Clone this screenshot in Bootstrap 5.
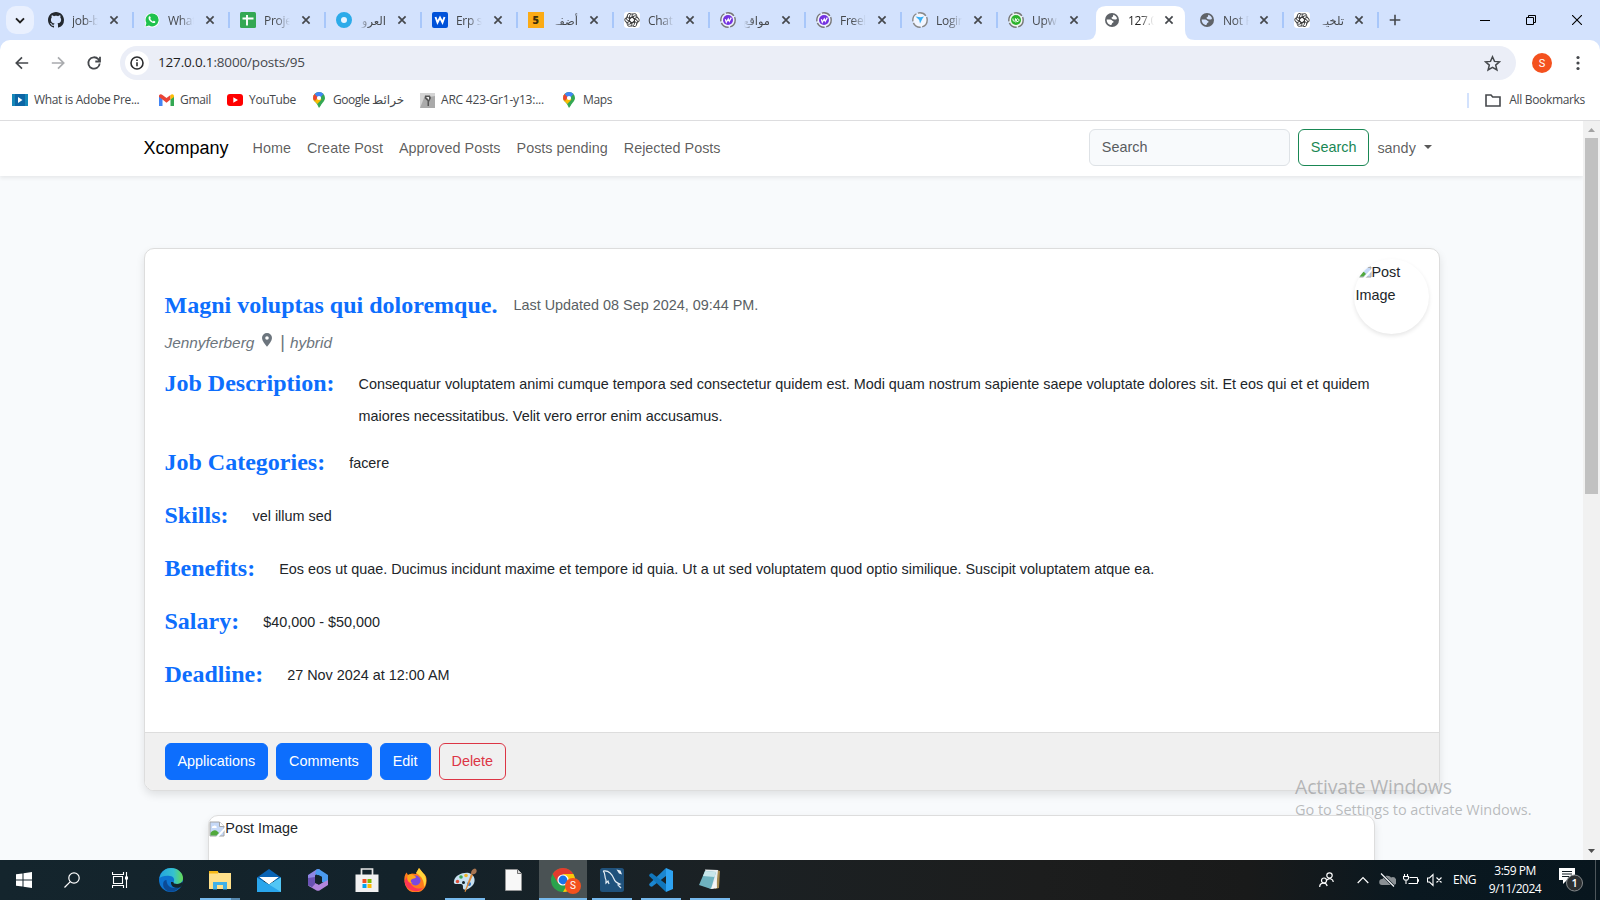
<!DOCTYPE html>
<html lang="en">
<head>
<meta charset="utf-8">
<meta name="viewport" content="width=device-width, initial-scale=1">
<title>127.0.0.1:8000/posts/95</title>
<link href="https://cdn.jsdelivr.net/npm/bootstrap@5.3.0/dist/css/bootstrap.min.css" rel="stylesheet">
<style>
  html, body { height: 900px; overflow: hidden; }
  body { font-family: "Liberation Sans", Arial, sans-serif; font-size: 14.4px; line-height: 1.6; background: #f8fafc; width: 1600px; }
  .ui-font { font-family: "Open Sans", "Noto Sans", "DejaVu Sans", sans-serif; color: #45484c; line-height: 1; }
  svg { display: block; flex: none; }

  /* tab strip */
  .tab-strip { height: 40px; background: #d3e2fd; padding-left: 6px; font-size: 12px; }
  .tab-search { width: 28px; height: 28px; border-radius: 10px; background: #e9f0fe; margin-right: 3px; }
  .tab-item { width: 96px; height: 40px; padding-left: 11px; position: relative; flex: none; }
  .tab-item.slim { width: 95px; }
  .tab-item::after { content: ""; position: absolute; right: -1px; top: 12px; width: 2px; height: 16px; background: #a8c7fa; }
  .tab-item.plain::after { display: none; }
  .tab-title { width: 26px; height: 18px; line-height: 18px; margin: 1px 11px 0 8px; overflow: hidden; white-space: nowrap; letter-spacing: -.3px; -webkit-mask-image: linear-gradient(90deg, #000 45%, transparent 100%); mask-image: linear-gradient(90deg, #000 45%, transparent 100%); }
  .slim .tab-title { margin-right: 10px; }
  .tab-item.site { padding-left: 12px; }
  .site .tab-title { margin-left: 9px; }
  .tab-title[dir=rtl] { -webkit-mask-image: linear-gradient(270deg, #000 60%, transparent 100%); mask-image: linear-gradient(270deg, #000 60%, transparent 100%); font-size: 11.5px; }
  .tab-item.current { color: #1f1f1f; z-index: 1; --cut: #fff; }
  .tab-item.current > * { position: relative; }
  .tab-shape { position: absolute !important; left: -7px; top: 6px; }
  .win-btn { width: 46px; }

  /* toolbar */
  .bar-wrap { background: #d3e2fd; }
  .tool-row { height: 46px; background: #fff; border-radius: 10px 10px 0 0; padding: 0 15px 0 14px; }
  .omnibox { height: 34px; border-radius: 17px; background: #ebeef7; width: 1396px; margin-left: 18px; padding: 0 15px 0 5px; }
  .site-info { width: 24px; height: 24px; border-radius: 50%; background: #fff; }
  .address { font-size: 13.5px; margin-left: 9px; letter-spacing: -.17px; }
  .avatar { width: 20px; height: 20px; border-radius: 50%; background: #f4511e; color: #fff; font-size: 11px; font-family: Roboto, sans-serif; }
  .bookmark-row { height: 35px; background: #fff; border-bottom: 1px solid #dddddf; font-size: 12px; letter-spacing: -.33px; padding: 0 15px 6px 12px; white-space: nowrap; }
  .bm svg { margin-right: 6px; }

  /* page */
  .viewport { width: 1583px; height: 739px; overflow: hidden; }
  .page-nav { box-shadow: 0 2px 4px rgba(0,0,0,.075); background: #fff; position: relative; }
  .page-nav .navbar-brand { font-size: 18px; }
  .page-nav .form-control, .btn { font-size: 14.4px; line-height: 1.6; }
  .page-nav .form-control { width: 201px; background: #f8fafc; }
  .page-nav .form-control::placeholder { color: #595c5f; }
  .post { margin-top: 72px; border: 1px solid #ddd; border-radius: 10px; box-shadow: 0 4px 8px rgba(0,0,0,.1); overflow: hidden; background: #fff; }
  .post-body { height: 483px; padding: 37px 20px 0; position: relative; }
  .serif-title { font-family: "Liberation Serif", "Times New Roman", serif; font-weight: 700; font-size: 24px; line-height: 38px; color: #0d6efd; margin: 0; white-space: nowrap; }
  .meta-row { font-size: 15.4px; font-style: italic; color: #6c757d; height: 40px; padding-bottom: 2px; }
  .meta-bar { font-style: normal; font-size: 18px; line-height: 1; position: relative; top: -1px; }
  .detail { column-gap: 24px; margin-bottom: 15px; }
  .detail p { margin: 0; line-height: 32px; padding-top: 4px; }
  .detail:not(.long) { height: 38px; }
  .detail.long { height: 64px; }
  .round-img { position: absolute; right: 10px; top: 10px; width: 75px; height: 75px; border-radius: 50%; overflow: hidden; line-height: 23px; padding: 2px 0 0 2px; }
  .round-shadow { position: absolute; right: 10px; top: 10px; width: 75px; height: 75px; border-radius: 50%; box-shadow: 0 2px 4px rgba(0,0,0,.1); }
  .post-foot { background: #f0f0f0; border-top: 1px solid #ddd; padding: 10px 20px; }
  .post-next { width: 90%; margin: 24px auto 0; padding-top: 1px; height: 200px; border: 1px solid #ddd; border-radius: 10px; overflow: hidden; background: #fff; box-shadow: 0 4px 8px rgba(0,0,0,.1); }
  .scroll-track { width: 17px; background: #f1f1f1; height: 739px; }
  .scroll-thumb { width: 13px; height: 356px; background: #c1c1c1; }
  .activate { position: absolute; left: 1295px; top: 773px; color: rgba(120,122,125,.5) !important; white-space: nowrap; z-index: 5; }

  /* taskbar */
  .taskbar { height: 40px; background: linear-gradient(90deg, #14252d 0, #13222a 25%, #1b2124 45%, #1c1d1d 65%, #191a1a 78%, #0a1820 88%, #08161e 100%); color: #fff !important; }
  .tb { width: 48px; height: 40px; flex: none; position: relative; }
  .tb.app { width: 49px; }
  .tb.run::after { content: ""; position: absolute; bottom: 0; left: 4.5px; width: 40px; height: 2px; background: #76b9ed; }
  .tb.stacked::after { background: linear-gradient(90deg, #76b9ed 31px, #5587ad 31px); }
  .tb.active-app { background: linear-gradient(90deg,transparent .5px,#4a5254 .5px,#4a5254 48.5px,transparent 48.5px); }
  .tb.active-app::after { left: .5px; width: 48px; }
  .user-dot { position: absolute; left: 27px; top: 18px; width: 16px; height: 16px; border-radius: 50%; background: #f4511e; font: 10px/16px Roboto, sans-serif; text-align: center; }
</style>
</head>
<body>
<!-- shared symbols -->
<svg width="0" height="0" class="position-absolute">
  <defs>
    <symbol id="x" viewBox="0 0 10 10"><path d="M1.400 1.400l7.200 7.200M8.600 1.400L1.400 8.600" stroke="#45484c" stroke-width="1.700" fill="none"/></symbol>
    <symbol id="globe" viewBox="0 0 14 14"><circle cx="7" cy="7" r="7" fill="#5f6368"/><path d="M8.200 1.800c1.800.4 3.200 1.800 3.800 3.400-.2 1.200-1.200 1.400-2.200 1.200L8 6.200c-.8-.4-1.600-.6-1.500-1.400.4-.8 1.700-.9 1.600-1.800z" style="fill:var(--cut,#d3e2fd)"/><path d="M1.700 6.500h3.500c1.600 0 1.800 1.500 3 1.700.8.300.4 1.400-.6 1.600-.9.400-.4 1.500-1.300 2.200C3.700 12 1.500 9.500 1.700 6.500z" style="fill:var(--cut,#d3e2fd)"/></symbol>
    <symbol id="gpt" viewBox="0 0 16 16"><rect width="16" height="16" rx="3" fill="#fff"/><g fill="none" stroke="#3c3c3c" stroke-width=".9"><g id="petal"><path d="M8 5.200V4.200a2.400 2.400 0 0 1 4.800-.4M5.600 9.400V4.300a2.600 2.600 0 0 1 3.600-2.200M5.600 6.600l2.400-1.400 4.200 2.400"/></g><use href="#petal" transform="rotate(60 8 8)"/><use href="#petal" transform="rotate(120 8 8)"/><use href="#petal" transform="rotate(180 8 8)"/><use href="#petal" transform="rotate(240 8 8)"/><use href="#petal" transform="rotate(300 8 8)"/></g></symbol>
    <symbol id="pur" viewBox="0 0 16 16"><circle cx="8" cy="8" r="7.200" fill="#eef2ff" stroke="#777" stroke-width="1.400" stroke-dasharray="9 1.500"/><circle cx="8" cy="8" r="5" fill="#7433e0"/><path d="M5.300 7.200l1 3 2-3.400 1 2.600 2-3.800" stroke="#fff" fill="none" stroke-width="1.200"/></symbol>
    <symbol id="pin" viewBox="0 0 12 16"><path d="M6 0a6 6 0 0 1 6 6c0 3-3 5-4.200 7.500L6 16l-1.500-3C3.200 10 0 9 0 6a6 6 0 0 1 6-6z" fill="#34a853"/><path d="M.3 7.500A6 6 0 0 1 1.600 2L8.500 7.500 4.300 12C3 10 .8 9.500.3 7.500z" fill="#fbbc04"/><path d="M.2 7A6 6 0 0 1 1.600 2l3.500 3L2 9z" fill="#ea4335"/><path d="M1.600 2A6 6 0 0 1 10.500 2L7 6 4.500 5z" fill="#4285f4"/><circle cx="6" cy="6" r="2.100" fill="#fff"/></symbol>
    <symbol id="broken" viewBox="0 0 16 16"><path d="M1 1h9.500L15 5.500V15H1z" fill="#c6d9f7" stroke="#a4a4a4"/><path d="M10.500 1v4.500H15" fill="#fff" stroke="#a4a4a4"/><path d="M3 6.500a1.300 1.300 0 0 1 1.500-1.500 1.500 1.500 0 0 1 2.500.3 1 1 0 0 1 .5 1.600H3z" fill="#fff"/><path d="M1.500 14.500v-2.500c2-3 5-3.500 7-1.500l1.500 1.500-2.500 2.500z" fill="#51a93c"/><path d="M16 6L7 16h2.500L16 9z" fill="#fff"/></symbol>
  </defs>
</svg>

<div class="tab-strip ui-font d-flex align-items-center">
  <div class="tab-search d-flex align-items-center justify-content-center"><svg width="10" height="7" viewBox="0 0 10 7"><path d="M1 1.300l4 4 4-4" fill="none" stroke="#1f1f1f" stroke-width="1.900"/></svg></div>
  <div class="tab-item d-flex align-items-center"><svg width="16" height="16" viewBox="0 0 16 16"><path fill="#24292f" d="M8 0C3.580 0 0 3.580 0 8c0 3.540 2.290 6.530 5.470 7.590.4.070.55-.17.55-.38 0-.19-.01-.82-.01-1.490-2.010.37-2.530-.49-2.690-.94-.09-.23-.48-.94-.82-1.130-.28-.15-.68-.52-.01-.53.630-.01 1.080.58 1.230.82.720 1.210 1.870.87 2.330.66.070-.52.280-.87.510-1.070-1.780-.2-3.640-.89-3.640-3.950 0-.87.310-1.590.820-2.150-.08-.2-.36-1.020.08-2.120 0 0 .67-.21 2.200.82.640-.18 1.320-.27 2-.27s1.360.09 2 .27c1.530-1.040 2.200-.82 2.200-.82.440 1.100.16 1.920.08 2.120.510.56.820 1.270.820 2.150 0 3.070-1.870 3.750-3.650 3.950.290.25.540.730.540 1.480 0 1.070-.01 1.930-.01 2.200 0 .21.150.46.550.38A8.010 8.010 0 0 0 16 8c0-4.420-3.580-8-8-8z"/></svg><div class="tab-title">job-b</div><svg width="10" height="10"><use href="#x"/></svg></div>
  <div class="tab-item d-flex align-items-center"><svg width="16" height="16" viewBox="0 0 16 16"><path d="M.5 15.500l1-4.200A7.300 7.300 0 1 1 4.500 14.500z" fill="#fff"/><path d="M1.500 14.500l.9-3.500A6.500 6.500 0 1 1 5 13.600z" fill="#1fc24d"/><path d="M5 4.500c1-1 1.500.5 1.800 1.200.2.500-.8.900-.5 1.400A5 5 0 0 0 8.600 9.400c.6.200.8-.9 1.300-.7.800.4 2 .7 1.300 1.800-1.500 2-7-1.500-6.600-4.700 0-.5.100-1 .4-1.300z" fill="#fff"/></svg><div class="tab-title">What</div><svg width="10" height="10"><use href="#x"/></svg></div>
  <div class="tab-item d-flex align-items-center"><svg width="16" height="16" viewBox="0 0 16 16"><rect width="16" height="16" rx="1.500" fill="#34a853"/><path d="M2.500 6.500h11M7 3v10.500" stroke="#fff" stroke-width="1.900"/></svg><div class="tab-title">Proje</div><svg width="10" height="10"><use href="#x"/></svg></div>
  <div class="tab-item d-flex align-items-center"><svg width="16" height="16" viewBox="0 0 16 16"><circle cx="8" cy="8" r="5.500" fill="#e8f4ff" stroke="#2cabe9" stroke-width="5"/></svg><div class="tab-title" dir="rtl">العرو</div><svg width="10" height="10"><use href="#x"/></svg></div>
  <div class="tab-item d-flex align-items-center"><svg width="16" height="16" viewBox="0 0 16 16"><rect width="16" height="16" rx="2" fill="#0052d9"/><path d="M3.500 5l2 5.500L8 5.500l2.500 5L12.500 5" fill="none" stroke="#fff" stroke-width="1.900"/></svg><div class="tab-title">Erp s</div><svg width="10" height="10"><use href="#x"/></svg></div>
  <div class="tab-item d-flex align-items-center"><svg width="16" height="16" viewBox="0 0 16 16"><rect width="16" height="16" fill="#fbab15"/><text x="4.600" y="12.200" font-size="11" font-weight="800" fill="#40300a">5</text></svg><div class="tab-title" dir="rtl">أضفـ</div><svg width="10" height="10"><use href="#x"/></svg></div>
  <div class="tab-item d-flex align-items-center"><svg width="16" height="16"><use href="#gpt"/></svg><div class="tab-title">Chat</div><svg width="10" height="10"><use href="#x"/></svg></div>
  <div class="tab-item d-flex align-items-center"><svg width="16" height="16"><use href="#pur"/></svg><div class="tab-title" dir="rtl">مواقع</div><svg width="10" height="10"><use href="#x"/></svg></div>
  <div class="tab-item d-flex align-items-center"><svg width="16" height="16"><use href="#pur"/></svg><div class="tab-title">Freel</div><svg width="10" height="10"><use href="#x"/></svg></div>
  <div class="tab-item d-flex align-items-center"><svg width="16" height="16" viewBox="0 0 16 16"><circle cx="8" cy="8" r="7.200" fill="#f2f6ff" stroke="#888" stroke-width="1.400" stroke-dasharray="9 1.500"/><path d="M3.500 4.500l5 .8 3.500-.8-1.500 2-2.500 5-.8-3.500z" fill="#39b0f5"/></svg><div class="tab-title">Login</div><svg width="10" height="10"><use href="#x"/></svg></div>
  <div class="tab-item plain d-flex align-items-center"><svg width="16" height="16" viewBox="0 0 16 16"><circle cx="8" cy="8" r="7.200" fill="#eef6f0" stroke="#777" stroke-width="1.400" stroke-dasharray="9 1.500"/><circle cx="8" cy="8" r="5" fill="#2bb32b"/><path d="M5 6.500v2q1.200 1.500 2.400 0V6.500Q8.500 9 9 9.500a1.400 1.400 0 1 0-.6-2l-.6 3" stroke="#fff" fill="none"/></svg><div class="tab-title">Upw</div><svg width="10" height="10"><use href="#x"/></svg></div>
  <div class="tab-item slim site plain current d-flex align-items-center"><svg class="tab-shape" width="109" height="34" viewBox="0 0 109 34"><path d="M0 34q10 0 10-10V10Q10 0 20 0h69q10 0 10 10v14q0 10 10 10z" fill="#fff"/></svg><svg width="14" height="14"><use href="#globe"/></svg><div class="tab-title">127.0</div><svg width="10" height="10"><use href="#x"/></svg></div>
  <div class="tab-item slim site d-flex align-items-center"><svg width="14" height="14"><use href="#globe"/></svg><div class="tab-title">Not F</div><svg width="10" height="10"><use href="#x"/></svg></div>
  <div class="tab-item slim d-flex align-items-center"><svg width="16" height="16"><use href="#gpt"/></svg><div class="tab-title" dir="rtl">تلخيـ</div><svg width="10" height="10"><use href="#x"/></svg></div>
  <svg width="12" height="12" viewBox="0 0 12 12" style="margin-left:11px"><path d="M6 .7v10.600M.7 6h10.600" stroke="#45484c" stroke-width="1.600"/></svg>
  <div class="ms-auto d-flex align-items-center">
    <div class="win-btn d-flex justify-content-center"><svg width="10" height="10"><path d="M0 5.500h10" stroke="#000"/></svg></div>
    <div class="win-btn d-flex justify-content-center"><svg width="10" height="10"><path d="M.5 2.500h7v7h-7zM2.500 2.500v-2h7v7h-2" fill="none" stroke="#000"/></svg></div>
    <div class="win-btn d-flex justify-content-center"><svg width="10" height="10"><path d="M0 0l10 10M10 0L0 10" stroke="#000" stroke-width="1.100"/></svg></div>
  </div>
</div>

<div class="bar-wrap">
<div class="tool-row ui-font d-flex align-items-center">
  <svg width="16" height="16" viewBox="0 0 16 16"><path d="M14.200 8H2.600M8 2.300L2.300 8 8 13.700" fill="none" stroke="#45484c" stroke-width="1.700"/></svg>
  <svg width="16" height="16" viewBox="0 0 16 16" style="margin:0 20px"><path d="M1.800 8h11.600M8 2.300L13.700 8 8 13.700" fill="none" stroke="#a9abae" stroke-width="1.700"/></svg>
  <svg width="16" height="16" viewBox="0 0 16 16"><path d="M13.700 8.500A5.700 5.700 0 1 1 12.300 4.200L13.800 6M14 1.800v4.700H9.300" fill="none" stroke="#45484c" stroke-width="1.800"/></svg>
  <div class="omnibox d-flex align-items-center">
    <div class="site-info d-flex align-items-center justify-content-center"><svg width="14" height="14" viewBox="0 0 14 14"><circle cx="7" cy="7" r="6" fill="none" stroke="#2b2c2e" stroke-width="1.600"/><path d="M7 6.200v4M7 3.500v1.500" stroke="#2b2c2e" stroke-width="1.600"/></svg></div>
    <span class="address"><span style="color:#1f1f1f">127.0.0.1</span>:8000/posts/95</span>
    <svg class="ms-auto" width="17" height="17" viewBox="0 0 17 17"><path d="M8.500 1.800l2 4.600 5 .4-3.800 3.300 1.200 4.900-4.400-2.600-4.400 2.600 1.200-4.900L1.500 6.800l5-.4z" fill="none" stroke="#45484c" stroke-width="1.500"/></svg>
  </div>
  <div class="avatar d-flex align-items-center justify-content-center" style="margin-left:16px">S</div>
  <svg class="ms-auto" width="14" height="16" viewBox="0 0 14 16"><g fill="#45484c"><circle cx="7" cy="2.500" r="1.600"/><circle cx="7" cy="8" r="1.600"/><circle cx="7" cy="13.500" r="1.600"/></g></svg>
</div>
<div class="bookmark-row ui-font d-flex align-items-center">
  <div class="bm d-flex align-items-center" style="width:147px"><svg width="16" height="12" viewBox="0 0 16 12"><rect width="16" height="12" fill="#1687b8"/><rect x="3" width="10" height="12" fill="#0b65a5"/><path d="M6 3l4.500 3L6 9z" fill="#fff"/></svg>What is Adobe Pre...</div>
  <div class="bm d-flex align-items-center" style="width:68px"><svg width="15" height="12" viewBox="0 0 15 12"><path d="M0 1.500V12h3.500V5z" fill="#4285f4"/><path d="M15 1.500V12h-3.500V5z" fill="#34a853"/><path d="M0 1.500Q1.500-.8 3.500 1l4 3 4-3v4.500l-4 3.200-4-3.200L0 3z" fill="#ea4335"/><path d="M11.500 1Q13.500-.8 15 1.500V3l-3.500 2.500z" fill="#fbbc04"/></svg>Gmail</div>
  <div class="bm d-flex align-items-center" style="width:86px"><svg width="16" height="12" viewBox="0 0 16 12"><rect width="16" height="12" rx="3" fill="#f00"/><path d="M6.300 3.300L11 6 6.300 8.700z" fill="#fff"/></svg>YouTube</div>
  <div class="bm d-flex align-items-center" style="width:107px;letter-spacing:-.5px"><svg width="12" height="16" style="margin-right:8px"><use href="#pin"/></svg>Google&nbsp;<bdi>خرائط</bdi></div>
  <div class="bm d-flex align-items-center" style="width:143px;letter-spacing:-.2px"><svg width="15" height="15" viewBox="0 0 15 15"><rect width="15" height="15" fill="#aaa"/><path d="M0 0h15v3L4 5 0 15z" fill="#d4d4d4"/><path d="M5 2.500h5l1 2.500-2 4v4H7.500V8L4.500 5z" fill="#555"/><path d="M6 4h3v3z" fill="#eee"/></svg>ARC 423-Gr1-y13:...</div>
  <div class="bm d-flex align-items-center"><svg width="12" height="16" style="margin-right:8px"><use href="#pin"/></svg>Maps</div>
  <div class="ms-auto d-flex align-items-center"><span style="width:2px;height:15px;background:#d3e2fd;margin-right:16px"></span><svg width="16" height="13" viewBox="0 0 16 13" style="margin-right:8px"><path d="M1 1h5l1.700 2H15v9H1z" fill="none" stroke="#45484c" stroke-width="1.600"/></svg>All Bookmarks</div>
</div>
</div>

<div class="d-flex">
  <div class="viewport">
    <nav class="navbar navbar-expand navbar-light page-nav">
      <div class="container">
        <a class="navbar-brand" href="#">Xcompany</a>
        <div class="navbar-nav me-auto">
          <a class="nav-link" href="#">Home</a>
          <a class="nav-link" href="#">Create Post</a>
          <a class="nav-link" href="#">Approved Posts</a>
          <a class="nav-link" href="#">Posts pending</a>
          <a class="nav-link" href="#">Rejected Posts</a>
        </div>
        <div class="d-flex align-self-start">
          <input class="form-control me-2" type="search" placeholder="Search">
          <button class="btn btn-outline-success" type="button">Search</button>
        </div>
        <div class="navbar-nav"><a class="nav-link dropdown-toggle" href="#">sandy </a></div>
      </div>
    </nav>

    <main class="container">
      <article class="post">
        <div class="post-body">
          <div class="round-shadow"></div>
          <div class="round-img"><svg class="d-inline-block" width="16" height="16" style="vertical-align:-1px"><use href="#broken"/></svg>Post Image</div>
          <div class="d-flex align-items-center">
            <h1 class="serif-title">Magni voluptas qui doloremque.</h1>
            <span class="ms-3" style="color:#5a5f64">Last Updated 08 Sep 2024, 09:44 PM.</span>
          </div>
          <div class="meta-row d-flex align-items-center"><span>Jennyferberg</span><svg width="10" height="14" viewBox="0 0 10 14" style="margin:-7px 8px 0 8px"><path fill="#6c757d" fill-rule="evenodd" d="M5 0a5 5 0 0 1 5 5c0 3-3 6-5 8.800C3 11 0 8 0 5a5 5 0 0 1 5-5zm0 3.200a1.800 1.800 0 1 0 0 3.600 1.800 1.800 0 0 0 0-3.600z"/></svg><span class="meta-bar">|</span><span style="margin-left:5px">hybrid</span></div>
          <div class="detail long d-flex"><h2 class="serif-title">Job Description:</h2><p>Consequatur voluptatem animi cumque tempora sed consectetur quidem est. Modi quam nostrum sapiente saepe voluptate dolores sit. Et eos qui et et quidem maiores necessitatibus. Velit vero error enim accusamus.</p></div>
          <div class="detail d-flex"><h2 class="serif-title">Job Categories:</h2><p>facere</p></div>
          <div class="detail d-flex"><h2 class="serif-title">Skills:</h2><p>vel illum sed</p></div>
          <div class="detail d-flex"><h2 class="serif-title">Benefits:</h2><p>Eos eos ut quae. Ducimus incidunt maxime et tempore id quia. Ut a ut sed voluptatem quod optio similique. Suscipit voluptatem atque ea.</p></div>
          <div class="detail d-flex"><h2 class="serif-title">Salary:</h2><p>$40,000 - $50,000</p></div>
          <div class="detail d-flex"><h2 class="serif-title">Deadline:</h2><p>27 Nov 2024 at 12:00 AM</p></div>
        </div>
        <div class="post-foot d-flex gap-2">
          <button class="btn btn-primary" type="button">Applications</button>
          <button class="btn btn-primary" type="button">Comments</button>
          <button class="btn btn-primary" type="button">Edit</button>
          <button class="btn btn-outline-danger" type="button">Delete</button>
        </div>
      </article>
      <div class="post-next"><div class="d-flex align-items-center"><svg width="16" height="16"><use href="#broken"/></svg>Post Image</div></div>
    </main>
  </div>
  <div class="scroll-track d-flex flex-column align-items-center">
    <svg width="17" height="17"><path d="M5 11h7L8.500 7z" fill="#a3a3a3"/></svg>
    <div class="scroll-thumb"></div>
    <svg class="mt-auto" width="17" height="17"><path d="M5 6h7L8.500 10z" fill="#505050"/></svg>
  </div>
</div>

<div class="activate ui-font">
  <div style="font-size:19.500px;line-height:28px;letter-spacing:-.2px">Activate Windows</div>
  <div style="font-size:14.500px;line-height:18px;letter-spacing:-.03px">Go to Settings to activate Windows.</div>
</div>

<div class="taskbar ui-font d-flex">
  <div class="tb d-flex align-items-center justify-content-center"><svg width="16" height="16" viewBox="0 0 16 16"><path d="M0 2.300L6.500 1.400V7.500H0zM7.500 1.200L16 0v7.500H7.500zM0 8.500h6.500v6.100L0 13.700zM7.500 8.500H16V16l-8.500-1.200z" fill="#fff"/></svg></div>
  <div class="tb d-flex align-items-center justify-content-center"><svg width="16" height="16" viewBox="0 0 16 16"><circle cx="10" cy="6" r="5.200" fill="none" stroke="#fff" stroke-width="1.200"/><path d="M6.300 9.700L.5 15.500" stroke="#fff" stroke-width="1.200"/></svg></div>
  <div class="tb d-flex align-items-center justify-content-center" style="width:26px;margin:0 11px"><svg width="17" height="16" viewBox="0 0 17 16"><path d="M1.500 4.500h9v7h-9zM.5 0v2.500h11V0M.5 16v-2.500h11V16M14.500 0v16" fill="none" stroke="#fff" stroke-width="1.100"/><path d="M13 4.500h3v3h-3z" fill="#fff"/></svg></div>
  <div class="tb app d-flex align-items-center justify-content-center" style="margin-left:2px"><svg width="24" height="24" viewBox="0 0 24 24"><defs><linearGradient id="eg" x1="0" x2="1"><stop offset="0" stop-color="#23a5dd"/><stop offset=".6" stop-color="#35c1d0"/><stop offset="1" stop-color="#66db52"/></linearGradient></defs><circle cx="12" cy="12" r="12" fill="#0d74d0"/><path d="M.5 10C2 3 7 0 12 0c7 0 12 5 12 10 0 4-3 6-6 6-3 0-4-1-3.500-2 1.500-2 .5-5.500-3.500-6C6 7 2 9 .5 10z" fill="url(#eg)"/><path d="M7.500 12c0 7 7 10.500 14 6-4 7-14 8-17 1-1-4 0-7 3-7z" fill="#0b4a95"/><path d="M14.500 14c-.5 1 .5 2 3.500 2 2.500 0 4.500-1 5.500-2.500l.5 3-2.500 2.500c-4 2-10 .5-9.500-5z" fill="#13242c"/></svg></div>
  <div class="tb app run stacked d-flex align-items-center justify-content-center"><svg width="22" height="19" viewBox="0 0 22 19"><path d="M0 1h9l1 1h12v16H0z" fill="#ffe08a"/><path d="M0 0h9v2.500H0z" fill="#f7b916"/><path d="M4 18.500V11h14v7.500h-4V14H8v4.500z" fill="#3fb0e8"/></svg></div>
  <div class="tb app d-flex align-items-center justify-content-center"><svg width="24" height="23" viewBox="0 0 24 23"><path d="M0 8.500L12 0l12 8.500V12H0z" fill="#0963b4"/><path d="M2.500 8h19L12 15.500z" fill="#fff"/><path d="M0 8.500L12 15.500 24 8.500V23H0z" fill="#2aa6ec"/><path d="M2.500 8h19L12 15z" fill="#fff"/><path d="M12 15.500L24 8.500V23z" fill="#52c6f5"/></svg></div>
  <div class="tb app d-flex align-items-center justify-content-center"><svg width="20" height="22" viewBox="0 0 20 22"><path d="M0 6L8.500.500Q10-.3 12 .5L7 6.500V15l-4 3.200L0 16z" fill="#8f86e4"/><path d="M8.500.5Q10-.3 11.500.5L20 6v9.500l-6-2.500V8L7 5z" fill="#4a9bf0"/><path d="M20 11v5l-8.500 5.500q-1.500.7-3 0L0 16.500 7 14l4 1.800 3-1.800z" fill="#b286dd"/><path d="M0 9v7l4 2.300L7 15V8z" fill="#6a52b4"/><path d="M7 8l3.500-2L14 8v5l-3.500 2.500L7 13.500z" fill="#13222a"/></svg></div>
  <div class="tb app d-flex align-items-center justify-content-center"><svg width="24" height="24" viewBox="0 0 24 24"><path d="M6.500 8V1h11v7" fill="none" stroke="#e6e6e6" stroke-width="1.700"/><path d="M.5 6.500h23V24H.5z" fill="#f1f1f1"/><path d="M7.500 11h4v4h-4z" fill="#f25022"/><path d="M12.500 11h4v4h-4z" fill="#7fba00"/><path d="M7.500 16h4v4h-4z" fill="#00a4ef"/><path d="M12.500 16h4v4h-4z" fill="#ffb900"/></svg></div>
  <div class="tb app d-flex align-items-center justify-content-center"><svg width="23" height="24" viewBox="0 0 23 24"><path d="M1.500 6l1-1.500L4 7l4-1.500L12 6l3-6 4 5c3 2 4 5 3.500 9A11 11 0 0 1 .5 13C0 10.500.5 8 1.500 6z" fill="#ff7a1c"/><path d="M12 5l3-5 4 5c4 4 4 10 1 14 0-5-1-10-8-14z" fill="#ffd43a"/><path d="M.5 13A11 11 0 0 0 20 19c-3 3-12 2-14-5-1 0-3-1-3-5z" fill="#ff3654"/><circle cx="11.500" cy="12.500" r="5" fill="#7a48e0"/><path d="M4 7c3-2 6 0 8 2 0 2-4 1-5 3-1 1 0 3 2 3-4 1-7-3-5-8z" fill="#ffa61a"/></svg></div>
  <div class="tb app run d-flex align-items-center justify-content-center"><svg width="24" height="24" viewBox="0 0 24 24"><path d="M1 13C2 7 10 4 16 5c6 2 7 8 4 12-4 5-10 6-10 3s0-4-3-4-7 1-6-3z" fill="#c8e1f1"/><circle cx="4.500" cy="13.500" r="1.700" fill="#d94f3a"/><circle cx="8" cy="9" r="1.800" fill="#3aa757"/><circle cx="13" cy="7.500" r="1.800" fill="#f0b429"/><circle cx="10.500" cy="14.500" r="1.500" fill="#13222a"/><circle cx="16" cy="16" r="2" fill="#2a73c8"/><path d="M12.500 24l-1-.5L18 6l2 1z" fill="#dd8a3a"/><path d="M18 6c0-4 2-5 4-5.500 2 .5 2 3 1 4.500-1.500 1.500-3 1.500-5 1z" fill="#a87552"/></svg></div>
  <div class="tb app d-flex align-items-center justify-content-center"><svg width="17" height="22" viewBox="0 0 17 22"><path d="M.5.5H12.500l4 4v17H.5z" fill="#f8f8f8" stroke="#9b9b9b" stroke-width=".7"/><path d="M12.500.5v4h4" fill="#ddd" stroke="#555" stroke-width=".8"/></svg></div>
  <div class="tb app run active-app d-flex align-items-center justify-content-center"><svg width="24" height="24" viewBox="0 0 24 24"><circle cx="12" cy="12" r="12" fill="#2aa24c"/><path d="M1.600 6A12 12 0 0 1 22.400 6L12 6.500 7 15z" fill="#e33b2e"/><path d="M22.400 6A12 12 0 0 1 12 24l5-9-5-9z" fill="#fdc60a"/><circle cx="12" cy="12" r="5.600" fill="#fff"/><circle cx="12" cy="12" r="4.400" fill="#1a73e8"/></svg><span class="user-dot">S</span></div>
  <div class="tb app run d-flex align-items-center justify-content-center"><svg width="24" height="24" viewBox="0 0 24 24"><rect width="24" height="24" rx="2.500" fill="#20527c"/><path d="M3 3c5-1 9 3 11 8 1 3 3 4 6 5l-2 1 3 3M3 3c3 2 1 6 3 9v3l2-2 1 3" fill="none" stroke="#e6eef5" stroke-width="1.200"/><path d="M16.500 1.500l4 1 1.500 4-3-1z" fill="#e6eef5"/></svg></div>
  <div class="tb app run d-flex align-items-center justify-content-center"><svg width="24" height="24" viewBox="0 0 24 24"><path d="M17 0l7 3v18l-7 3z" fill="#2ea3f2"/><path d="M17 0L.7 15.500 0 17l2 1.700 1.300-.1L17 8z" fill="#1b86d0"/><path d="M17 24L.7 8.500 0 7l2-1.700 1.300.1L17 16z" fill="#1177bd"/></svg></div>
  <div class="tb app run d-flex align-items-center justify-content-center"><svg width="24" height="24" viewBox="0 0 24 24"><path d="M19 2l3 1-1 17-4 1z" fill="#a58a50"/><path d="M7 1.500l13 .5-2 18-6 1z" fill="#e8eef0"/><path d="M7 3l11 1-5 17L1 17z" fill="#6fb3c0"/><path d="M7 3l11 1-1.500 5L5 8z" fill="#c8e6ea"/><path d="M13 21l5.500-11 .5 10z" fill="#f6f6f6"/></svg></div>

  <div class="ms-auto d-flex align-items-center">
    <svg width="15" height="16" viewBox="0 0 15 16" fill="none" stroke="#fff" stroke-width="1.200"><circle cx="10.500" cy="3.500" r="2.700"/><circle cx="5" cy="8.500" r="2.500"/><path d="M.7 15c0-5 6.500-5 7.500-1M8 8c3-2.500 6-1 6.300 2"/></svg>
    <svg width="12" height="8" viewBox="0 0 12 8" style="margin-left:23px"><path d="M.7 7L6 1.500 11.300 7" fill="none" stroke="#fff" stroke-width="1.200"/></svg>
    <svg width="17" height="14" viewBox="0 0 17 14" style="margin-left:10px"><path d="M3 12a3 3 0 0 1 .5-6A5 5 0 0 1 12 4.500 4 4 0 0 1 15 12z" fill="#8a9094"/><path d="M2 .5l13 13" stroke="#13202a" stroke-width="2.600"/><path d="M2 .5l13 13" stroke="#fff" stroke-width="1.100"/></svg>
    <svg width="16" height="14" viewBox="0 0 16 14" fill="none" stroke="#fff" style="margin-left:7px"><path d="M6.500 4.500h8v6h-9M14.500 6.500h1v2h-1"/><path d="M1.500 1v2.500M4.500 1v2.500M.5 3.500h5v2l-1 1.500h-3l-1-1.500zM3 7v4" stroke-width="1.100"/></svg>
    <svg width="15" height="14" viewBox="0 0 15 14" fill="none" stroke="#fff" style="margin-left:8px"><path d="M.5 5h2L6 1.500v11L2.500 9h-2zM9.500 4.500l5 5M14.500 4.500l-5 5" stroke-width="1.100"/></svg>
    <span style="margin-left:11px;width:24px;font-size:12px;letter-spacing:-.5px">ENG</span>
    <div class="text-center" style="margin-left:10px;width:56px;font-size:12px;line-height:18px;letter-spacing:-.5px;white-space:nowrap">3:59 PM<br>9/11/2024</div>
    <svg width="26" height="26" viewBox="0 0 26 26" style="margin-left:15px"><path d="M1 1h16v12H9l-4 4v-4H1z" fill="#fff"/><path d="M4 4.500h10M4 7h10M4 9.500h7" stroke="#111c22"/><circle cx="16.500" cy="16" r="8" fill="#2b2f31" stroke="#868a8c"/><text x="13.500" y="20" font-size="11" fill="#fff" font-weight="600">1</text></svg>
    <span style="width:1px;height:40px;background:#4d565b;margin:0 4px 0 11px"></span>
  </div>
</div>
<script src="https://cdn.jsdelivr.net/npm/bootstrap@5.3.0/dist/js/bootstrap.bundle.min.js"></script>
</body>
</html>
